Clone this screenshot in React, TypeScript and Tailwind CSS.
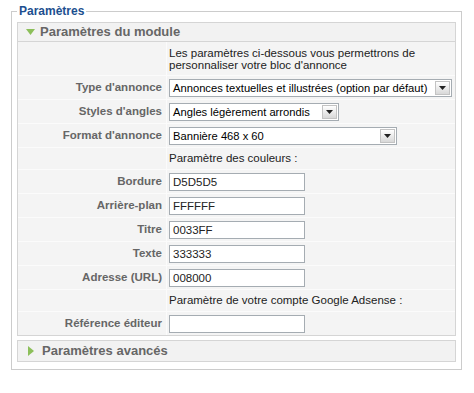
import type { ReactNode } from 'react'

function Select ({ value, width }: { value: string, width: string }): JSX.Element {
  return (
    <div className={`flex h-[18px] items-stretch border border-[#a5acb2] bg-white ${width}`}>
      <span className="flex-1 overflow-hidden whitespace-nowrap pl-[3px] leading-[16px] text-[11.2px] text-black">{value}</span>
      <span className="m-px flex w-[15px] items-center justify-center border border-[#c3c3c3] bg-gradient-to-b from-white to-[#d8d8d8]">
        <svg width="7" height="4" viewBox="0 0 7 4"><path d="M0 0h7L3.5 4z" fill="#222" /></svg>
      </span>
    </div>
  )
}

function Input ({ value }: { value: string }): JSX.Element {
  return (
    <div className="h-[18px] w-[136px] border border-[#a5acb2] bg-white pl-[3px] text-[11.5px] leading-[16px] text-[#222]">
      {value}
    </div>
  )
}

function Row ({ label, h = 'h-[23px]', children }: { label?: string, h?: string, children: ReactNode }): JSX.Element {
  return (
    <>
      <div className={`flex items-center justify-end bg-[#f4f4f4] pr-[4px] text-[11.5px] font-bold text-[#666] ${h}`}>
        {label}
      </div>
      <div className={`flex items-center bg-[#f4f4f4] pl-[2px] text-[11.5px] text-[#222] ${h}`}>
        {children}
      </div>
    </>
  )
}

function Triangle ({ open }: { open: boolean }): JSX.Element {
  return open
    ? <svg width="9" height="6" viewBox="0 0 9 6"><path d="M0 0h9L4.5 6z" fill="#8cbf5a" /></svg>
    : <svg width="6" height="10" viewBox="0 0 6 10"><path d="M0 0l6 5-6 5z" fill="#8cbf5a" /></svg>
}

export default function App (): JSX.Element {
  return (
    <div className="min-h-[393px] w-[474px] bg-white pt-[3px] font-['Liberation_Sans',Arial,sans-serif]">
      <fieldset className="ml-[11px] w-[451px] border border-[#cccccc] px-[5px] pb-[7px] pt-[3px]">
        <legend className="px-[2px] text-[12px] font-bold leading-[16px] text-[#1d4f8f]">Paramètres</legend>

        <div className="border border-[#d5d5d5]">
          <div className="flex h-[19px] items-center gap-[5px] border-b border-[#d5d5d5] bg-[#f2f2f2] pl-[8px] text-[13px] font-bold text-[#666]">
            <Triangle open />
            <span>Paramètres du module</span>
          </div>
          <div className="grid grid-cols-[148px_1fr] gap-px bg-[#fbfbfb]">
            <Row h="h-[33px]">
              <p className="pt-[1px] leading-[12px]">Les paramètres ci-dessous vous permettrons de<br />personnaliser votre bloc d'annonce</p>
            </Row>
            <Row label="Type d'annonce"><Select value="Annonces textuelles et illustrées (option par défaut)" width="w-[283px]" /></Row>
            <Row label="Styles d'angles"><Select value="Angles légèrement arrondis" width="w-[170px]" /></Row>
            <Row label="Format d'annonce"><Select value="Bannière 468 x 60" width="w-[228px]" /></Row>
            <Row h="h-[21px]">Paramètre des couleurs :</Row>
            <Row label="Bordure"><Input value="D5D5D5" /></Row>
            <Row label="Arrière-plan"><Input value="FFFFFF" /></Row>
            <Row label="Titre"><Input value="0033FF" /></Row>
            <Row label="Texte"><Input value="333333" /></Row>
            <Row label="Adresse (URL)"><Input value="008000" /></Row>
            <Row h="h-[21px]">Paramètre de votre compte Google Adsense :</Row>
            <Row label="Référence éditeur"><Input value="" /></Row>
          </div>
        </div>

        <div className="mt-[4px] flex h-[22px] items-center gap-[8px] border border-[#d5d5d5] bg-[#f2f2f2] pl-[10px] text-[13px] font-bold text-[#666]">
          <Triangle open={false} />
          <span>Paramètres avancés</span>
        </div>
      </fieldset>
    </div>
  )
}
